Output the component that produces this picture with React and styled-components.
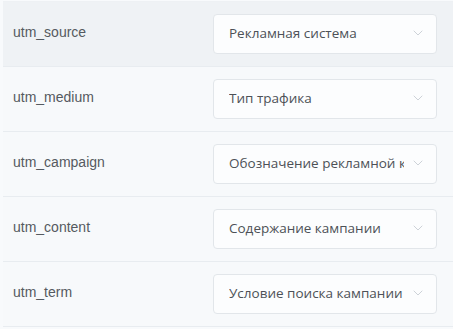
import React from 'react'
import styled, { createGlobalStyle } from 'styled-components'

const GlobalStyle = createGlobalStyle`
  html, body {
    margin: 0;
    padding: 0;
    background: #f8fafc;
  }
  body {
    width: 453px;
    height: 329px;
    overflow: hidden;
  }
`

const fields = [
  { name: 'utm_source', placeholder: 'Рекламная система', active: true },
  { name: 'utm_medium', placeholder: 'Тип трафика' },
  { name: 'utm_campaign', placeholder: 'Обозначение рекламной кампании' },
  { name: 'utm_content', placeholder: 'Содержание кампании' },
  { name: 'utm_term', placeholder: 'Условие поиска кампании' },
]

function Chevron() {
  return (
    <svg width="10" height="6" viewBox="0 0 10 6" fill="none">
      <path d="M1 1l4 4 4-4" stroke="#cdd2d8" strokeWidth="1" strokeLinecap="round" strokeLinejoin="round" />
    </svg>
  )
}

function App() {
  return (
    <>
      <GlobalStyle />
      <Table>
        {fields.map(f => (
          <Row key={f.name} $active={f.active}>
            <Label>{f.name}</Label>
            <Select>
              <SelectText>{f.placeholder}</SelectText>
              <Arrow><Chevron /></Arrow>
            </Select>
          </Row>
        ))}
      </Table>
    </>
  )
}

export default App

const Table = styled.div`
  margin-top: 1px;
  margin-left: 3px;
  border-top: 1px solid #eef1f4;
`

const Row = styled.div`
  display: flex;
  align-items: center;
  justify-content: space-between;
  height: 64px;
  padding: 0 16px 0 10px;
  border-bottom: 1px solid #e8ecf0;
  background: ${p => (p.$active ? '#eff2f5' : '#f7f9fb')};
`

const Label = styled.div`
  font-family: 'Liberation Sans', Arial, sans-serif;
  font-size: 14px;
  color: #555a60;
  margin-top: -4px;
`

const Select = styled.div`
  position: relative;
  display: flex;
  align-items: center;
  box-sizing: border-box;
  width: 224px;
  height: 40px;
  padding: 0 32px 0 15px;
  background: #fcfdfe;
  border: 1px solid #e2e6ea;
  border-radius: 4px;
`

const SelectText = styled.span`
  font-family: 'Open Sans', 'Noto Sans', sans-serif;
  font-size: 13.5px;
  color: #4d5157;
  white-space: nowrap;
  overflow: hidden;
  margin-top: -2px;
`

const Arrow = styled.span`
  position: absolute;
  right: 13px;
  top: 50%;
  transform: translateY(-50%);
  margin-top: -1px;
  display: flex;
`
